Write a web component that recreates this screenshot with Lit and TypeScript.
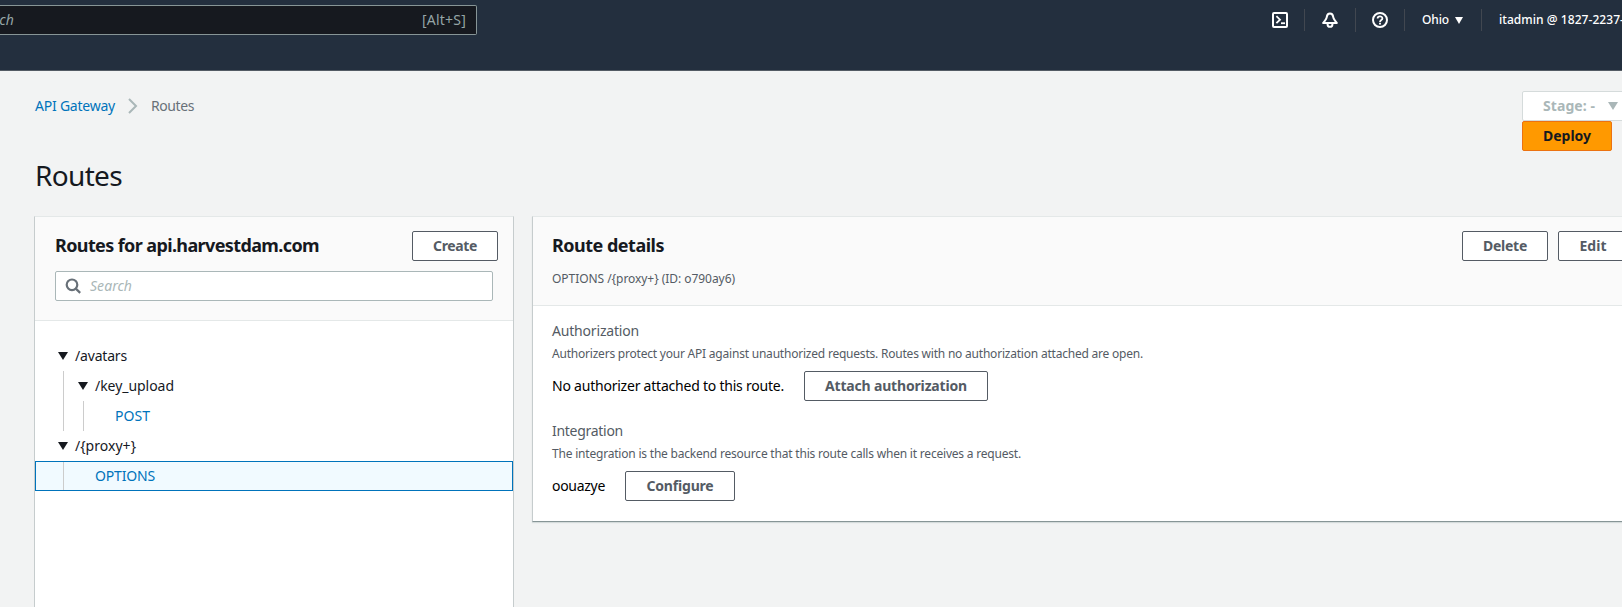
import { LitElement, html, css, svg } from "lit";
import { customElement, property } from "lit/decorators.js";

/** A line of text whose tracking is tuned so that it spans a given width. */
@customElement("fit-text")
class FitText extends LitElement {
  @property({ type: Number }) width = 0;
  static styles = css`
    :host { display: inline-block; white-space: nowrap; flex: none; }
    .run { display: inline-block; white-space: pre; }
  `;
  render() { return html`<span class="run"><slot></slot></span>`; }
  firstUpdated() {
    const run = this.renderRoot.querySelector(".run") as HTMLElement;
    const n = (this.textContent || "").length;
    const natural = run.getBoundingClientRect().width;
    if (n > 0 && this.width) {
      this.style.letterSpacing = (this.width - natural) / n + "px";
      this.style.width = this.width + "px";
    }
  }
}

const t = (s: string, w: number) => html`<fit-text .width=${w}>${s}</fit-text>`;
const caret = html`<svg class="caret" width="10" height="8" viewBox="0 0 10 8">${svg`<path d="M0 0h10L5 8z" fill="currentColor"/>`}</svg>`;

@customElement("app-root")
class AppRoot extends LitElement {
  static styles = css`
    :host { display: block; width: 1622px; height: 607px; overflow: hidden; background: #f2f3f3;
      font: 14px/22px "Noto Sans", "Open Sans", sans-serif; color: #16191f; }
    * { box-sizing: border-box; }
    svg { display: block; flex: none; }
    .top { height: 71px; background: #232f3e; border-bottom: 1px solid #545b64; display: flex; justify-content: space-between; align-items: flex-start; }
    .find { margin-top: 5px; width: 477px; height: 30px; border: 1px solid #879596; border-left: 0; border-radius: 0 2px 2px 0; background: #16191f;
      color: #95a5a6; display: flex; justify-content: space-between; align-items: center; padding-right: 10px; }
    .find i { width: 14px; display: flex; justify-content: flex-end; overflow: hidden; }
    .tools { display: flex; align-items: center; height: 40px; color: #fff; font-size: 12px; font-weight: 500; width: 351px; overflow: hidden; }
    .cell { display: flex; align-items: center; justify-content: center; height: 22px; border-right: 1px solid #414750; flex: none; }
    .c1 { width: 34px; padding-right: 16px; } .c2 { width: 51px; height: 24px; } .c3 { width: 49px; }
    .c4 { width: 77px; gap: 6px; padding-right: 1px; } .who { padding-left: 17px; }
    .small { width: 8px; height: 7px; }
    .head { display: flex; justify-content: space-between; height: 145px; padding: 20px 0 0 35px; }
    .crumbs { display: flex; align-items: center; height: 30px; color: #687078; }
    .crumbs svg { margin: 0 13px; }
    .link { color: #0073bb; }
    h1 { margin: 36px 0 0; font-size: 28px; line-height: 36px; font-weight: 400; }
    .acts { width: 100px; }
    .btn { display: flex; align-items: center; justify-content: center; height: 30px; border: 1px solid #545b64; border-radius: 2px; background: #fff;
      color: #545b64; font-weight: 700; flex: none; }
    .stage { width: 120px; justify-content: flex-start; padding-left: 20px; gap: 13px; border-color: #d5dbdb; color: #aab7b8; }
    .deploy { width: 90px; background: #ff9900; border-color: #ec7211; color: #16191f; }
    .cols { display: flex; gap: 18px; padding-left: 34px; align-items: flex-start; }
    .card { background: #fff; border: 1px solid #c6cccd; border-top-color: #e4e8e8; flex: none; }
    .routes { width: 480px; height: 420px; }
    .rhead { height: 104px; background: #fafafa; border-bottom: 1px solid #e4e8e8; padding: 14px 15px 0 20px; }
    .row { display: flex; align-items: center; }
    .between { justify-content: space-between; }
    h2 { margin: 0; padding-bottom: 2px; font-size: 18px; line-height: 22px; font-weight: 700; display: flex; }
    .create { width: 86px; }
    .search { margin-top: 10px; width: 438px; height: 30px; border: 1px solid #aab7b8; border-radius: 2px; background: #fff; display: flex; align-items: center;
      padding-left: 9px; gap: 9px; color: #aab7b8; font-style: italic; }
    .tree { padding-top: 20px; }
    .node { display: flex; align-items: center; height: 30px; }
    .pad { width: 23px; flex: none; }
    .bar { width: 20px; align-self: stretch; margin-left: 5px; margin-right: -5px; border-left: 1px solid #ccc; flex: none; }
    .node .caret { margin-right: 7px; }
    .leaf { margin-left: 17px; }
    .on { background: #f1faff; outline: 1px solid #0073bb; outline-offset: -1px; }
    .details { width: 1100px; height: 306px; border-bottom: 1px solid #879596; box-shadow: 0 1px 1px #d5dbdb; }
    .dhead { height: 89px; background: #fafafa; border-bottom: 1px solid #e4e8e8; padding: 14px 0 0 19px; }
    .drow { display: flex; align-items: center; width: 1072px; height: 30px; }
    .del { width: 86px; margin-left: auto; } .edit { width: 70px; margin: 0 -4px 0 10px; }
    .note { color: #545b64; font-size: 12px; line-height: 18px; display: flex; }
    .dhead .note { margin-top: 9px; }
    .label { color: #545b64; line-height: 22px; display: flex; }
    .sect { padding: 14px 0 0 19px; height: 100px; }
    .sect .note { margin-top: 3px; }
    .val { display: flex; align-items: center; height: 30px; margin-top: 8px; gap: 20px; color: #000; }
    .attach { width: 184px; } .conf { width: 110px; }
  `;

  render() {
    return html`
      <div class="top">
        <div class="find"><i>${t("Search", 43)}</i>${t("[Alt+S]", 44)}</div>
        <div class="tools">
          <div class="cell c1"><svg width="16" height="16" viewBox="0 0 16 16" fill="none" stroke="#fff" stroke-width="2"><rect x="1" y="1" width="14" height="14" rx="1"/><path d="M4.4 4.2 8 7.7 4.4 11.2" stroke-width="1.8"/><path d="M9 11.2h4" stroke-width="1.8"/></svg></div>
          <div class="cell c2"><svg width="16" height="16" viewBox="0 0 16 16" fill="none" stroke="#fff" stroke-width="2" stroke-linejoin="round"><path d="M8 1.400C5.900 1.400 5 3 4.800 4.800 4.600 6.800 3.600 8 1.200 10.900H14.800C12.400 8 11.400 6.800 11.200 4.800 11 3 10.100 1.400 8 1.400z"/><path d="M5.600 11.500v.9a2.400 2.400 0 0 0 4.800 0v-.9"/></svg></div>
          <div class="cell c3"><svg width="16" height="16" viewBox="0 0 16 16" fill="none" stroke="#fff" stroke-width="2"><circle cx="8" cy="8" r="7"/><path d="M5.600 6.600C5.600 3.600 10.400 3.700 10.400 6.400 10.400 8 8 7.900 8 9.900" stroke-width="1.800"/><path d="M8 10.700v1.700" stroke-width="1.900"/></svg></div>
          <div class="cell c4">${t("Ohio", 27)}<svg class="small" viewBox="0 0 8 7"><path d="M0 0h8L4 7z" fill="#fff"/></svg></div>
          <div class="who">${t("itadmin @ 1827-2237-", 125)}</div>
        </div>
      </div>
      <div class="head">
        <div>
          <div class="crumbs"><span class="link">${t("API Gateway", 80)}</span>
            <svg width="10" height="16" viewBox="0 0 10 16" fill="none" stroke="#aab7b8" stroke-width="2"><path d="M1 1l7 7-7 7"/></svg>
            ${t("Routes", 43)}</div>
          <h1>${t("Routes", 87)}</h1>
        </div>
        <div class="acts">
          <div class="btn stage">${t("Stage: -", 52)}${caret}</div>
          <div class="btn deploy">${t("Deploy", 48)}</div>
        </div>
      </div>
      <div class="cols">
        <div class="card routes">
          <div class="rhead">
            <div class="row between"><h2>${t("Routes for api.harvestdam.com", 264)}</h2><div class="btn create">${t("Create", 44)}</div></div>
            <div class="search"><svg width="16" height="16" viewBox="0 0 16 16" fill="none" stroke="#687078" stroke-width="2.200"><circle cx="7" cy="6.800" r="5.300"/><path d="M10.800 10.600l4.400 4.300"/></svg>${t("Search", 42)}</div>
          </div>
          <div class="tree">
            <div class="node"><span class="pad"></span>${caret}${t("/avatars", 52)}</div>
            <div class="node"><span class="pad"></span><span class="bar"></span>${caret}${t("/key_upload", 79)}</div>
            <div class="node"><span class="pad"></span><span class="bar"></span><span class="bar"></span><span class="link leaf">${t("POST", 35)}</span></div>
            <div class="node"><span class="pad"></span>${caret}${t("/{proxy+}", 61)}</div>
            <div class="node on"><span class="pad"></span><span class="bar"></span><span class="link leaf">${t("OPTIONS", 60)}</span></div>
          </div>
        </div>
        <div class="card details">
          <div class="dhead">
            <div class="drow"><h2>${t("Route details", 112)}</h2><div class="btn del">${t("Delete", 44)}</div><div class="btn edit">${t("Edit", 27)}</div></div>
            <div class="note">${t("OPTIONS /{proxy+} (ID: o790ay6)", 183)}</div>
          </div>
          <div class="sect">
            <div class="label">${t("Authorization", 87)}</div>
            <div class="note">${t("Authorizers protect your API against unauthorized requests. Routes with no authorization attached are open.", 591)}</div>
            <div class="val">${t("No authorizer attached to this route.", 232)}<div class="btn attach">${t("Attach authorization", 142)}</div></div>
          </div>
          <div class="sect">
            <div class="label">${t("Integration", 71)}</div>
            <div class="note">${t("The integration is the backend resource that this route calls when it receives a request.", 469)}</div>
            <div class="val">${t("oouazye", 53)}<div class="btn conf">${t("Configure", 67)}</div></div>
          </div>
        </div>
      </div>`;
  }
}
